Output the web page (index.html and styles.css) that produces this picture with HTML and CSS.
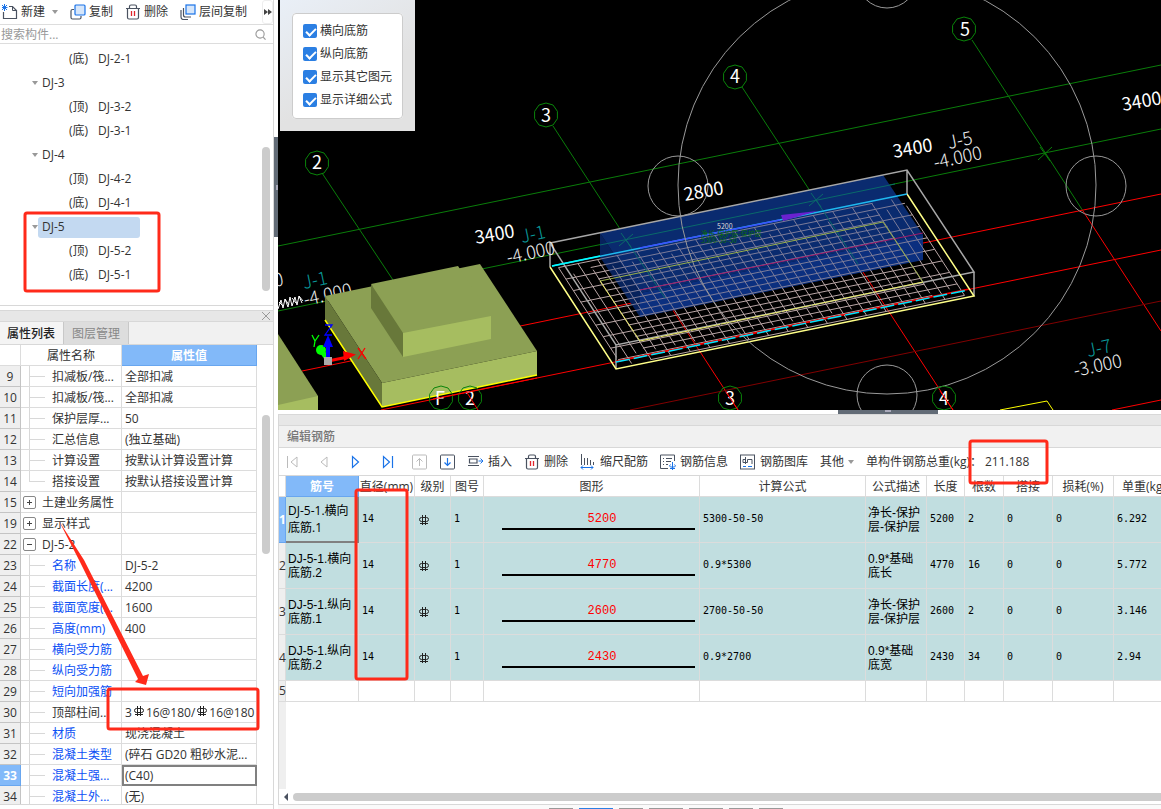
FILE: index.html
```html
<!DOCTYPE html>
<html lang="zh-CN">
<head>
  <meta charset="UTF-8" />
  <meta name="viewport" content="width=device-width, initial-scale=1.0" />
  <title>编辑钢筋</title>
  <link rel="stylesheet" href="styles.css">
</head>
<body>
  <svg class="defs" aria-hidden="true">
    <symbol id="rebar" viewBox="0 0 10 10">
      <path d="M3.500 0V10M6.500 0V10M1 8.500H9" fill="none" stroke="currentColor"/>
      <rect x=".5" y="2.500" width="9" height="4" rx="2" fill="none" stroke="currentColor"/>
    </symbol>
    <symbol id="trash" viewBox="0 0 16 16">
      <path d="M1 4.500H15M4.500 4V2.500Q4.500 1 6 1H10Q11.500 1 11.500 2.500V4M2.500 4.500V13.500Q2.500 15 4 15H12Q13.500 15 13.500 13.500V4.500" fill="none" stroke="#4a5260" stroke-width="1.200"/>
      <path d="M6.500 7V12M9.500 7V12" stroke="#e0242b" stroke-width="1.300"/>
    </symbol>
    <symbol id="bubble" viewBox="-13 -13 26 26">
      <polygon points="0,-12 7,-10 11.400,-3.700 11.400,3.700 7,10 0,12 -7,10 -11.400,3.700 -11.400,-3.700 -7,-10" fill="none" stroke="#0a850a"/>
    </symbol>
  </svg>

  <aside class="sidebar">
    <div class="tree-toolbar">
      <button type="button">
        <svg width="16" height="16" viewBox="0 0 16 16"><path d="M1.500 8V14.500H14.500V6.500L10.500 2.500H7" fill="none" stroke="#4a5260" stroke-width="1.200"/><path d="M10.500 2.500V6.500H14.500" fill="none" stroke="#4a5260"/><path d="M0 1L5 6M5 1L0 6M2.500 0V7M0 3.500H5.500" stroke="#1a73e8"/></svg>
        新建<i class="caret"></i>
      </button>
      <button type="button">
        <svg width="16" height="16" viewBox="0 0 16 16"><path d="M4 5.500H2.500Q1 5.500 1 7V13.500Q1 15 2.500 15H9.500Q11 15 11 13.500V12" fill="none" stroke="#4a5260" stroke-width="1.200"/><rect x="5" y="1" width="10" height="10" rx="1" fill="#d6e6fa" stroke="#1a73e8" stroke-width="1.200"/></svg>
        复制
      </button>
      <button type="button"><svg width="16" height="16"><use href="#trash"/></svg>删除</button>
      <button type="button">
        <svg width="16" height="16" viewBox="0 0 16 16"><path d="M1 6V13Q1 15.500 3.500 15.500H8M3.500 4V11Q3.500 13 5.500 13H11" fill="none" stroke="#4a5260" stroke-width="1.200"/><rect x="6" y="1" width="9" height="9" fill="#d6e6fa" stroke="#1a73e8" stroke-width="1.200"/></svg>
        层间复制
      </button>
      <button type="button" class="more" aria-label="更多"><svg width="8" height="6" viewBox="0 0 8 6"><path d="M0 0L4 3L0 6ZM4 0L8 3L4 6Z" fill="#444"/></svg></button>
    </div>
    <div class="search">
      <input type="text" placeholder="搜索构件..." aria-label="搜索构件" />
      <svg width="11" height="11" viewBox="0 0 12 12"><circle cx="5.500" cy="5.500" r="4.500" fill="none" stroke="#999" stroke-width="1.200"/><path d="M9 9L11.500 11.500" stroke="#999" stroke-width="1.200"/></svg>
    </div>
    <div class="tree">
      <ul>
        <li class="leaf"><span>(底)</span>DJ-2-1</li>
        <li class="group"><i class="caret"></i><b>DJ-3</b></li>
        <li class="leaf"><span>(顶)</span>DJ-3-2</li>
        <li class="leaf"><span>(底)</span>DJ-3-1</li>
        <li class="group"><i class="caret"></i><b>DJ-4</b></li>
        <li class="leaf"><span>(顶)</span>DJ-4-2</li>
        <li class="leaf"><span>(底)</span>DJ-4-1</li>
        <li class="group selected"><i class="caret"></i><b>DJ-5</b></li>
        <li class="leaf"><span>(顶)</span>DJ-5-2</li>
        <li class="leaf"><span>(底)</span>DJ-5-1</li>
      </ul>
      <div class="thumb"></div>
    </div>

    <section class="props">
      <div class="props-bar"><button type="button" aria-label="关闭"><svg width="8" height="8" viewBox="0 0 8 8"><path d="M0 0L8 8M8 0L0 8" stroke="#999"/></svg></button></div>
      <div class="tabs">
        <button type="button" class="active">属性列表</button>
        <button type="button">图层管理</button>
      </div>
      <div class="props-body">
        <table class="props-table">
          <colgroup><col class="c-num"><col class="c-name"><col class="c-value"></colgroup>
          <thead><tr><th></th><th>属性名称</th><th class="on">属性值</th></tr></thead>
          <tbody>
            <tr><th>9</th><td class="sub">扣减板/筏...</td><td>全部扣减</td></tr>
            <tr><th>10</th><td class="sub">扣减板/筏...</td><td>全部扣减</td></tr>
            <tr><th>11</th><td class="sub">保护层厚...</td><td>50</td></tr>
            <tr><th>12</th><td class="sub">汇总信息</td><td>(独立基础)</td></tr>
            <tr><th>13</th><td class="sub">计算设置</td><td>按默认计算设置计算</td></tr>
            <tr><th>14</th><td class="sub last">搭接设置</td><td>按默认搭接设置计算</td></tr>
            <tr><th>15</th><td class="top"><button type="button" class="fold" aria-label="展开"></button>土建业务属性</td><td></td></tr>
            <tr><th>19</th><td class="top"><button type="button" class="fold" aria-label="展开"></button>显示样式</td><td></td></tr>
            <tr><th>22</th><td class="top"><button type="button" class="fold open" aria-label="收起"></button>DJ-5-2</td><td></td></tr>
            <tr><th>23</th><td class="sub blue">名称</td><td>DJ-5-2</td></tr>
            <tr><th>24</th><td class="sub blue">截面长度(...</td><td>4200</td></tr>
            <tr><th>25</th><td class="sub blue">截面宽度(...</td><td>1600</td></tr>
            <tr><th>26</th><td class="sub blue">高度(mm)</td><td>400</td></tr>
            <tr><th>27</th><td class="sub blue">横向受力筋</td><td></td></tr>
            <tr><th>28</th><td class="sub blue">纵向受力筋</td><td></td></tr>
            <tr><th>29</th><td class="sub blue">短向加强筋</td><td></td></tr>
            <tr><th>30</th><td class="sub">顶部柱间...</td><td>3<svg class="bar-mark"><use href="#rebar"/></svg>16@180/<svg class="bar-mark"><use href="#rebar"/></svg>16@180</td></tr>
            <tr><th>31</th><td class="sub blue">材质</td><td>现浇混凝土</td></tr>
            <tr><th>32</th><td class="sub blue">混凝土类型</td><td>(碎石 GD20 粗砂水泥...</td></tr>
            <tr><th class="on">33</th><td class="sub blue">混凝土强...</td><td class="editing">(C40)</td></tr>
            <tr><th>34</th><td class="sub blue">混凝土外...</td><td>(无)</td></tr>
          </tbody>
        </table>
        <div class="thumb"></div>
      </div>
    </section>
  </aside>

  <div class="splitter"><div class="grip"></div></div>

  <main>
    <div class="viewport">
      <svg class="scene" viewBox="278 0 883 410" preserveAspectRatio="xMinYMin slice">
        <g class="axis-green">
          <path d="M278 246L1161 65M278 311L1161 129M322 173L393 280M553 126L665 298M742 87L863 272M972 40L1083 211"/>
          <path d="M619 246L633 234M621 233L631 247M809 206L823 194M811 193L821 207M1038 160L1052 147M1040 147L1050 161"/>
        </g>
        <g class="axis-red">
          <path d="M302 371L1161 194M381 410L1161 250M665 298L738 410M863 272L953 410M1083 211L1161 331M1112 410L1161 400"/>
          <path class="dark" d="M630 410L1161 301"/>
        </g>
        <path d="M1000 410L1047 401L1053 410" fill="none" stroke="#ff0"/>

        <text class="cad" transform="translate(275 287) rotate(-12)">0</text>
        <text class="cad teal" transform="translate(304 289) rotate(-12)">J-1</text>
        <text class="cad" transform="translate(305 306) rotate(-12)">-4.000</text>
        <path d="M278 309l3-9 2 8 2-9 3 8 2-10 2 9 3-9 2 8 2-9 3 7M279 302l4 4M285 299l4 6M292 298l4 5M299 296l4 5" fill="none" stroke="#fff"/>

        <!-- footings -->
        <path d="M278 334L318 396V410H278Z" fill="#8ca054"/>
        <path d="M278 405L318 396V410H278Z" fill="#a6bd60"/>
        <path d="M325 296L480 264L537 351L382 383Z" fill="#8ca054"/>
        <path d="M325 296V320L382 407V383Z" fill="#68783a"/>
        <path d="M382 383L537 351V375L382 407Z" fill="#a6bd60"/>
        <path d="M371 284L458 266L491 316L403 333Z" fill="#8ca054"/>
        <path d="M371 284V308L403 357V333Z" fill="#68783a"/>
        <path d="M403 333L491 316V339L403 357Z" fill="#a6bd60"/>
        <path d="M325 320L382 407L537 375" fill="none" stroke="#ff0" stroke-width="1.500"/>

        <!-- axis gizmo -->
        <g>
          <circle cx="321" cy="350" r="5" fill="#0f0"/><path d="M321 350L328 360" stroke="#0f0" stroke-width="5"/>
          <path d="M328 361L348 357" stroke="#f00" stroke-width="3"/><path d="M343 351L356 354.500L344 361Z" fill="#f00"/>
          <path d="M328 361V345" stroke="#00f" stroke-width="4"/><path d="M323 347L328 335L333 347Z" fill="#00f"/>
          <rect x="324" y="357" width="8" height="8" fill="#aaa"/>
          <path d="M312 335L315 341L319 335M315 341L314 347" fill="none" stroke="#0f0" stroke-width="1.300"/>
          <path d="M325 325H332L325 335H332" fill="none" stroke="#00f" stroke-width="1.300"/>
          <path d="M358 348L366 359M365 348L358 359" stroke="#f00" stroke-width="1.300"/>
        </g>

        <!-- selected footing with its mesh -->
        <path d="M600 233L883 175L923 235L640 293Z" fill="#0a2a66"/>
        <path d="M600 233V257L640 317V293Z" fill="#061d49"/>
        <path d="M640 293L923 235V260L640 317Z" fill="#0b317f"/>
        <g id="mesh"></g>
        <path d="M600 233L883 175L923 235V260L640 317L600 257Z" fill="#0b2f80" fill-opacity=".35"/>
        <g class="axis-teal"><path d="M600 245L895 184M619 246L633 234M621 233L631 247M809 206L823 194M811 193L821 207M626 240L665 298M816 200L858 264"/></g>
        <path d="M640 290L923 233" stroke="#a01a6a" fill="none"/>
        <path d="M550 243L907 170L974 272L616 345ZM550 243V267M907 170V194M974 272V296M616 345V369" fill="none" stroke="#a8a8a8" stroke-width="1.500"/>
        <path d="M550 267L616 369L974 296L907 194" fill="none" stroke="#ff8" stroke-width="1.500"/>
        <path d="M552 266L907 194" stroke="#1fb9f0" stroke-width="1.500"/>
        <path d="M616 361L968 289" stroke="#f00"/>
        <path d="M616 362L968 290" stroke="#00e5ff" stroke-dasharray="14 4" stroke-width="1.500"/>
        <path d="M552 266L600 256" stroke="#0ff" stroke-width="1.500"/>
        <path d="M640 248L780 220" stroke="#3c50ff" stroke-width="1.500"/>
        <path d="M781 215L818 211L783 221Z" fill="#6a22d0"/>
        <path d="M600 281L883 222L923 282" fill="none" stroke="#9ab04a"/>
        <path d="M600 281L640 341L923 282" fill="none" stroke="#ee6" stroke-dasharray="30 1"/>
        <text class="tiny green" x="701" y="236">净长-保护层-保护层</text>
        <text class="tiny green" x="701" y="243">5300-50-50</text>
        <text class="tiny" x="717" y="229">5200</text>

        <!-- orbit ring -->
        <g fill="none" stroke="#999">
          <circle cx="887" cy="185" r="209"/>
          <circle cx="678" cy="186" r="30"/><circle cx="1096" cy="186" r="30"/>
          <circle cx="887" cy="-22" r="30"/><circle cx="887" cy="395" r="30"/>
        </g>

        <g class="bubbles">
          <use href="#bubble" x="304" y="150" width="26" height="26"/><text x="317" y="169">2</text>
          <use href="#bubble" x="533" y="102" width="26" height="26"/><text x="546" y="122">3</text>
          <use href="#bubble" x="722" y="64" width="26" height="26"/><text x="735" y="83">4</text>
          <use href="#bubble" x="951" y="16" width="26" height="26"/><text x="965" y="36">5</text>
          <use href="#bubble" x="428" y="385" width="26" height="26"/><text x="440" y="405">F</text>
          <use href="#bubble" x="457" y="385" width="26" height="26"/><text x="470" y="405">2</text>
          <use href="#bubble" x="717" y="385" width="26" height="26"/><text x="730" y="405">3</text>
          <use href="#bubble" x="931" y="385" width="26" height="26"/><text x="944" y="405">4</text>
        </g>
        <g class="axis-red"><path d="M433 399L537 378M466 391L478 410M726 392L738 410M940 391L953 410"/></g>

        <g class="dims">
          <text transform="translate(476 244) rotate(-10)">3400</text>
          <text transform="translate(685 201) rotate(-10)">2800</text>
          <text transform="translate(894 158) rotate(-10)">3400</text>
          <text transform="translate(1123 111) rotate(-10)">3400</text>
        </g>
        <text class="cad teal" transform="translate(522 243) rotate(-12)">J-1</text>
        <text class="cad" transform="translate(508 264) rotate(-12)">-4.000</text>
        <text class="cad" transform="translate(949 149) rotate(-12)">J-5</text>
        <text class="cad" transform="translate(935 169) rotate(-12)">-4.000</text>
        <text class="cad teal" transform="translate(1088 357) rotate(-12)">J-7</text>
        <text class="cad" transform="translate(1075 377) rotate(-12)">-3.000</text>
      </svg>
      <div class="options">
        <fieldset>
          <label><input type="checkbox" checked />横向底筋</label>
          <label><input type="checkbox" checked />纵向底筋</label>
          <label><input type="checkbox" checked />显示其它图元</label>
          <label><input type="checkbox" checked />显示详细公式</label>
        </fieldset>
      </div>
    </div>

    <div class="h-splitter"><div class="grip"></div></div>

    <section class="editor">
      <div class="editor-bar"></div>
      <h2>编辑钢筋</h2>
      <div class="editor-toolbar">
        <button type="button" class="nav" aria-label="首条" disabled><svg width="16" height="16" viewBox="0 0 16 16"><path d="M3.500 2V14M13 3V13L7 8Z" fill="none" stroke="#bbb"/></svg></button>
        <button type="button" class="nav" aria-label="上一条" disabled><svg width="16" height="16" viewBox="0 0 16 16"><path d="M11 3V13L5 8Z" fill="none" stroke="#bbb"/></svg></button>
        <button type="button" class="nav" aria-label="下一条"><svg width="16" height="16" viewBox="0 0 16 16"><path d="M4.500 2.500V13.500L10.500 8Z" fill="none" stroke="#1a73e8" stroke-width="1.200"/></svg></button>
        <button type="button" class="nav" aria-label="末条"><svg width="16" height="16" viewBox="0 0 16 16"><path d="M3.500 2.500V13.500L9.500 8ZM12.500 2V14" fill="none" stroke="#1a73e8" stroke-width="1.200"/></svg></button>
        <button type="button" aria-label="上移" disabled><svg width="16" height="16" viewBox="0 0 16 16"><rect x=".5" y="1" width="14" height="14" rx="1" fill="none" stroke="#bbb"/><path d="M7.500 12V4.500M4.500 7.500L7.500 4.500L10.500 7.500" fill="none" stroke="#bbb"/></svg></button>
        <button type="button" aria-label="下移"><svg width="16" height="16" viewBox="0 0 16 16"><rect x=".5" y="1" width="14" height="14" rx="1" fill="none" stroke="#4a5260"/><path d="M7.500 4V11.500M4.500 8.500L7.500 11.500L10.500 8.500" fill="none" stroke="#1a73e8" stroke-width="1.200"/></svg></button>
        <button type="button"><svg width="16" height="16" viewBox="0 0 16 16"><path d="M0 2.500H11M0 11.500H11M9 5H1.500V9H9Z" fill="none" stroke="#4a5260" stroke-width="1.200"/><path d="M10.500 7H15M12.500 4.500L15 7L12.500 9.500" fill="none" stroke="#1a73e8"/></svg>插入</button>
        <button type="button"><svg width="16" height="16"><use href="#trash"/></svg>删除</button>
        <button type="button"><svg width="16" height="16" viewBox="0 0 16 16"><path d="M1.500 0V11M4.500 4V11M7.500 4V11M10.500 6V11M13.500 8V11" stroke="#4a5260"/><path d="M1 13.500H13M3 11.500L1 13.500L3 15.500M11 11.500L13 13.500L11 15.500" fill="none" stroke="#1a73e8"/></svg>缩尺配筋</button>
        <button type="button"><svg width="16" height="16" viewBox="0 0 16 16"><path d="M8 14.500H.5V1H14.500V7M3 4.500H4M6 4.500H12M3 7.500H4M6 7.500H11M3 10.500H4M6 10.500H8" fill="none" stroke="#4a5260"/><path d="M12.500 8V16M10.500 10.500Q8.500 12 10.500 13H14.500Q16.500 12 14.500 10.500M10 14.500H15" fill="none" stroke="#1a73e8"/></svg>钢筋信息</button>
        <button type="button"><svg width="16" height="16" viewBox="0 0 16 16"><rect x=".5" y="1" width="14" height="14" fill="none" stroke="#4a5260"/><path d="M5.500 3V10M5.500 5.500H3V8.500H7.500V5.500H12V10" fill="none" stroke="#4a5260"/><path d="M3 12.500H6M8 12.500H12" stroke="#1a73e8"/></svg>钢筋图库</button>
        <button type="button">其他<i class="caret"></i></button>
        <span class="total">单构件钢筋总重(kg)：<output>211.188</output></span>
      </div>
      <div class="sheet">
        <table class="rebar-table">
          <colgroup>
            <col class="w8"><col class="w72"><col class="w57"><col class="w35"><col class="w34"><col class="w215"><col class="w166"><col class="w61"><col class="w38"><col class="w39"><col class="w49"><col class="w61"><col class="w61">
          </colgroup>
          <thead>
            <tr><th></th><th class="on">筋号</th><th>直径(mm)</th><th>级别</th><th>图号</th><th>图形</th><th>计算公式</th><th>公式描述</th><th>长度</th><th>根数</th><th>搭接</th><th>损耗(%)</th><th>单重(kg)</th></tr>
          </thead>
          <tbody>
            <tr><th class="on">1</th><td class="name current">DJ-5-1.横向底筋.1</td><td>14</td><td><svg class="bar-mark"><use href="#rebar"/></svg></td><td>1</td><td class="shape"><span>5200</span></td><td>5300-50-50</td><td class="desc">净长-保护层-保护层</td><td>5200</td><td>2</td><td>0</td><td>0</td><td>6.292</td></tr>
            <tr><th>2</th><td class="name">DJ-5-1.横向底筋.2</td><td>14</td><td><svg class="bar-mark"><use href="#rebar"/></svg></td><td>1</td><td class="shape"><span>4770</span></td><td>0.9*5300</td><td class="desc">0.9*基础底长</td><td>4770</td><td>16</td><td>0</td><td>0</td><td>5.772</td></tr>
            <tr><th>3</th><td class="name">DJ-5-1.纵向底筋.1</td><td>14</td><td><svg class="bar-mark"><use href="#rebar"/></svg></td><td>1</td><td class="shape"><span>2600</span></td><td>2700-50-50</td><td class="desc">净长-保护层-保护层</td><td>2600</td><td>2</td><td>0</td><td>0</td><td>3.146</td></tr>
            <tr><th>4</th><td class="name">DJ-5-1.纵向底筋.2</td><td>14</td><td><svg class="bar-mark"><use href="#rebar"/></svg></td><td>1</td><td class="shape"><span>2430</span></td><td>0.9*2700</td><td class="desc">0.9*基础底宽</td><td>2430</td><td>34</td><td>0</td><td>0</td><td>2.94</td></tr>
            <tr class="blank"><th>5</th><td></td><td></td><td></td><td></td><td></td><td></td><td></td><td></td><td></td><td></td><td></td><td></td></tr>
          </tbody>
        </table>
        <div class="gutter"></div>
      </div>
      <div class="h-scroll"><i></i><div></div></div>
    </section>
    <footer><i></i><i class="primary"></i><i></i><i class="wide"></i><i class="wide"></i><i></i><i></i></footer>
  </main>

  <!-- red callouts over the page -->
  <svg class="callouts" aria-hidden="true">
    <g fill="none" stroke="#ff2a1a" stroke-width="3">
      <rect x="25" y="213" width="134" height="78" rx="2"/>
      <rect x="108" y="689" width="150" height="40" rx="2"/>
      <rect x="356" y="490" width="51" height="189" rx="2"/>
      <rect x="970" y="441" width="77" height="42" rx="2"/>
    </g>
    <path d="M59 521L84 560L143 676L149 674L146 685L135 682L138 679L80 562Z" fill="#ff2a1a"/>
  </svg>

  <script>
    // mesh bars: corner of the footing plus its long and short edge
    const origin = [550, 267];
    const along = [357, -73];
    const across = [66, 102];
    const mesh = document.getElementById("mesh");

    function point(s, t) {
      const x = origin[0] + along[0] * s + across[0] * t;
      const y = origin[1] + along[1] * s + across[1] * t;
      return x.toFixed(1) + " " + y.toFixed(1);
    }

    function bars(count, draw) {
      let d = "";
      for (let i = 0; i < count; i++) {
        const pos = 0.02 + 0.96 * i / (count - 1);
        // every other bar is shortened from the opposite end
        const from = i % 2 ? 0.1 : 0.02;
        const to = i % 2 ? 0.98 : 0.9;
        d += draw(pos, from, to);
      }
      return d;
    }

    const path = document.createElementNS("http://www.w3.org/2000/svg", "path");
    path.setAttribute("d",
      bars(18, (p, a, b) => `M${point(a, p)}L${point(b, p)}`) +
      bars(36, (p, a, b) => `M${point(p, a)}L${point(p, b)}`));
    mesh.appendChild(path);
  </script>
</body>
</html>
```
FILE: styles.css
```css
* {
  box-sizing: border-box;
}
body {
  margin: 0;
  height: 100vh;
  display: flex;
  position: relative;
  overflow: hidden;
  background: #fff;
  color: #333;
  font: 12px/20px "Open Sans", "Noto Sans CJK SC", sans-serif;
}
button {
  display: flex;
  align-items: center;
  gap: 4px;
  padding: 0;
  border: none;
  background: none;
  color: inherit;
  font: inherit;
  white-space: nowrap;
}
svg {
  flex: none;
}
.defs {
  position: absolute;
  width: 0;
  height: 0;
}
.caret {
  border: 3px solid transparent;
  border-top: 4px solid #999;
  border-bottom: none;
}
.thumb {
  position: absolute;
  right: 3px;
  width: 8px;
  border-radius: 4px;
  background: #ccc;
}

/* left side */
.sidebar {
  width: 274px;
  flex: none;
  display: flex;
  flex-direction: column;
  border-right: 1px solid #d8d8d8;
}
.tree-toolbar {
  display: flex;
  gap: 12px;
  height: 25px;
  padding-left: 2px;
  border-bottom: 1px solid #ddd;
}
.tree-toolbar button {
  gap: 3px;
}
.tree-toolbar .caret {
  margin-left: 4px;
}
.tree-toolbar .more {
  margin-left: auto;
  justify-content: center;
  width: 11px;
  border: 1px solid #eee;
  border-radius: 3px;
}
.search {
  display: flex;
  align-items: center;
  height: 19px;
  padding: 0 7px 0 1px;
  border-bottom: 1px solid #ddd;
}
.search input {
  flex: 1;
  min-width: 0;
  height: 18px;
  padding: 1px 0 0;
  border: none;
  outline: none;
  background: none;
  font: inherit;
}
.search input::placeholder {
  color: #999;
}
.tree {
  position: relative;
  height: 262px;
  border-bottom: 1px solid #d8d8d8;
}
.tree ul {
  margin: 0;
  padding: 3px 0 0;
  list-style: none;
}
.tree li {
  display: flex;
  align-items: center;
  height: 24px;
}
.tree .leaf {
  padding-left: 69px;
}
.tree .leaf span {
  width: 29px;
}
.tree .group {
  padding-left: 32px;
}
.tree .group b {
  width: 102px;
  height: 21px;
  padding-left: 4px;
  border-radius: 3px;
  font-weight: normal;
}
.tree .selected b {
  background: #c3d9f1;
}
.tree .thumb {
  top: 103px;
  height: 144px;
}
.props {
  flex: 1;
  min-height: 0;
  display: flex;
  flex-direction: column;
  margin: 4px 0 4px;
  border: solid #d8d8d8;
  border-width: 1px 0;
}
.props-bar {
  display: flex;
  justify-content: flex-end;
  height: 11px;
  padding-right: 3px;
  background: #e7e7e7;
  border-bottom: 1px solid #d8d8d8;
}
.tabs {
  display: flex;
  height: 23px;
  background: #f1f1f1;
  border-bottom: 1px solid #d8d8d8;
}
.tabs button {
  padding: 2px 8px 0;
  background: #ddd;
  color: #888;
  border-right: 1px solid #c8c8c8;
}
.tabs .active {
  padding: 2px 8px 0 7px;
  background: #f4f4f4;
  color: #222;
  font-weight: 500;
}
.props-body {
  position: relative;
  flex: 1;
  overflow: hidden;
}
.props-body .thumb {
  top: 70px;
  height: 139px;
}
table {
  table-layout: fixed;
  border-collapse: separate;
  border-spacing: 0;
}
th, td {
  padding: 0;
  border: solid #dcdcdc;
  border-width: 0 1px 1px 0;
  text-align: left;
  font-weight: normal;
  white-space: nowrap;
}
thead th {
  text-align: center;
}
th.on, thead th.on, .props-table tbody th.on {
  background: #82b9f9;
  border-color: #68a6ef;
  color: #fff;
  font-weight: bold;
}
.props-table {
  width: 257px;
}
.c-num { width: 21px; }
.c-name { width: 101px; }
.c-value { width: 135px; }
.props-table th, .props-table td {
  height: 21px;
  padding-top: 2px;
  overflow: hidden;
  line-height: 18px;
}
.props-table tbody th {
  background: #efefef;
  border-color: #c4c4c4;
  text-align: center;
}
.props-table td {
  padding-left: 3px;
}
.props-table .sub {
  padding-left: 31px;
  background:
    linear-gradient(#d8d8d8, #d8d8d8) 8px 0 / 1px 100% no-repeat,
    linear-gradient(#d8d8d8, #d8d8d8) 8px 10px / 16px 1px no-repeat;
}
.props-table .last {
  background-size: 1px 10px, 16px 1px;
}
.props-table .blue {
  color: #0b50f5;
}
.props-table .top {
  padding-left: 2px;
}
.props-table .editing {
  outline: 2px solid #808080;
  outline-offset: -2px;
}
.fold {
  display: inline-block;
  width: 13px;
  height: 13px;
  margin-right: 6px;
  vertical-align: -1px;
  border: 1px solid #888;
  border-radius: 2px;
  background:
    linear-gradient(#444, #444) center / 5px 1px no-repeat,
    linear-gradient(#444, #444) center / 1px 5px no-repeat;
}
.fold.open {
  background: linear-gradient(#444, #444) center / 5px 1px no-repeat;
}
.bar-mark {
  width: 10px;
  height: 10px;
  color: #222;
}
.props-table .bar-mark {
  margin: 0 2px;
  vertical-align: 1px;
}

.splitter {
  width: 4px;
  flex: none;
}
.splitter .grip {
  height: 100px;
  margin-top: 137px;
  background: linear-gradient(#aab, #aab) right center / 2px 5px no-repeat, #626b76;
}

/* 3D view */
main {
  flex: 1;
  min-width: 0;
  display: flex;
  flex-direction: column;
}
.viewport {
  position: relative;
  height: 410px;
  flex: none;
  background: #000;
  overflow: hidden;
}
.scene {
  display: block;
  width: 100%;
  height: 100%;
}
.axis-green path { stroke: #0a7d0a; fill: none; }
.axis-teal path { stroke: #0a6a6a; fill: none; }
.axis-red path { stroke: #f00; fill: none; }
.axis-red .dark { stroke: #800000; }
#mesh path {
  stroke: #b9a6a6;
  fill: none;
}
.cad {
  fill: #eee;
  font: 300 18px "Noto Sans CJK SC", sans-serif;
}
.cad.teal {
  fill: #0a9a9a;
}
.dims text, .bubbles text {
  fill: #fff;
  font: 18px "Noto Sans CJK SC", sans-serif;
}
.bubbles text {
  text-anchor: middle;
}
.tiny {
  fill: #ddd;
  font: 7px "Noto Sans CJK SC", sans-serif;
}
.tiny.green {
  fill: #0a6a0a;
}
.options {
  position: absolute;
  top: 0;
  left: 2px;
  padding: 13px 12px 12px;
  background: linear-gradient(150deg, #e9eff7, #e2e2e2 60%);
}
.options fieldset {
  margin: 0;
  padding: 5px 10px 7px;
  border: 1px solid #ccc;
  border-radius: 4px;
  background: #fff;
}
.options label {
  display: flex;
  align-items: center;
  gap: 3px;
  height: 23px;
  padding-top: 1px;
}
.options input {
  appearance: none;
  position: relative;
  width: 14px;
  height: 14px;
  margin: 0 0 1px;
  border-radius: 2px;
  background: #2b7fe3;
}
.options input:checked::after {
  content: "";
  position: absolute;
  left: 5px;
  top: 2px;
  width: 4px;
  height: 8px;
  border: solid #fff;
  border-width: 0 2px 2px 0;
  transform: rotate(45deg);
}
.h-splitter {
  height: 4px;
  flex: none;
}
.h-splitter .grip {
  width: 100px;
  height: 4px;
  margin-left: 560px;
  background: linear-gradient(#aab, #aab) center top / 6px 2px no-repeat, #626b76;
}

/* rebar editor */
.editor {
  flex: 1;
  min-height: 0;
  display: flex;
  flex-direction: column;
  border: solid #d8d8d8;
  border-width: 1px 0 1px 1px;
}
.editor-bar {
  height: 11px;
  flex: none;
  background: #e7e7e7;
  border-bottom: 1px solid #d8d8d8;
}
.editor h2 {
  margin: 0;
  padding-left: 8px;
  height: 22px;
  flex: none;
  background: #f1f1f1;
  border-bottom: 1px solid #d8d8d8;
  color: #777;
  font-size: 12px;
  line-height: 21px;
  font-weight: 500;
}
.editor-toolbar {
  display: flex;
  align-items: center;
  gap: 12px;
  height: 28px;
  flex: none;
  padding: 1px 0 0 5px;
  border-bottom: 1px solid #d8d8d8;
  white-space: nowrap;
}
.editor-toolbar .nav {
  margin-right: 4px;
}
.total output {
  margin-left: 3px;
}
.sheet {
  flex: 1;
  min-height: 0;
  overflow: hidden;
  display: flex;
  flex-direction: column;
}
.gutter {
  flex: 1;
  width: 7px;
  background: #efefef;
}
.rebar-table {
  width: 895px;
}
.w8 { width: 7px; }
.w72 { width: 73px; }
.w57 { width: 56px; }
.w35 { width: 36px; }
.w34 { width: 33px; }
.w215 { width: 216px; }
.w166 { width: 166px; }
.w61 { width: 61px; }
.w38 { width: 38px; }
.w39 { width: 39px; }
.w49 { width: 49px; }
.rebar-table thead th {
  height: 21px;
  padding-top: 2px;
  line-height: 18px;
}
.rebar-table tbody th {
  background: #efefef;
  text-align: center;
}
.rebar-table tbody th.on {
  background: #82b9f9;
}
.rebar-table td {
  height: 46px;
  padding: 0 3px 2px;
  background: #c1dee0;
  color: #000;
  font: 10px/14px "DejaVu Sans Mono", monospace;
}
.rebar-table .name, .rebar-table .desc {
  padding: 0 2px;
  font: 12px/14px "Liberation Sans", "Noto Sans CJK SC", sans-serif;
  white-space: normal;
  word-break: break-all;
}
.rebar-table .current {
  font: 12px/17px "Open Sans", "Noto Sans CJK SC", sans-serif;
  border-right: 2px solid #808080;
  border-bottom: 2px solid #808080;
}
.rebar-table .bar-mark {
  display: block;
  margin: 2px 0 0 1px;
}
.rebar-table .shape {
  padding-bottom: 0;
}
.rebar-table .shape span {
  display: block;
  margin: 0 1px 0 15px;
  padding: 1px 0 0 7px;
  border-bottom: 2px solid #000;
  color: #f00;
  text-align: center;
  font: 12px/17px "Liberation Mono", monospace;
}
.rebar-table .blank td, .rebar-table .blank th {
  height: 21px;
}
.rebar-table .blank td {
  background: #fff;
}
.h-scroll {
  display: flex;
  align-items: center;
  gap: 5px;
  height: 15px;
  flex: none;
  padding-left: 5px;
}
.h-scroll i {
  border: 4px solid transparent;
  border-right-color: #4a5260;
  border-left: none;
}
.h-scroll div {
  flex: 1;
  height: 8px;
  border-radius: 4px 0 0 4px;
  background: #ccc;
}
footer {
  display: flex;
  align-items: flex-end;
  gap: 6px;
  height: 4px;
  flex: none;
  padding-left: 271px;
  background: #fafafa;
}
footer i {
  width: 24px;
  height: 1px;
  background: #999;
}
footer .wide {
  width: 34px;
}
footer .primary {
  width: 34px;
  background: #2b7fe3;
}

.callouts {
  position: absolute;
  inset: 0;
  width: 100%;
  height: 100%;
  pointer-events: none;
}
```
